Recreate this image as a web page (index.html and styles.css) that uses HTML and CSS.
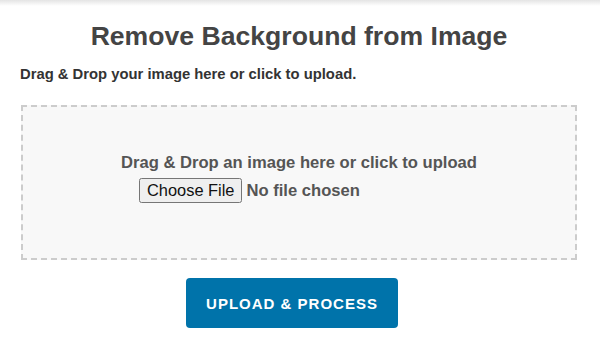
FILE: index.html
```html
<!DOCTYPE html>
<html>
<head>
    <link rel="stylesheet" href="styles.css">
</head>
<body>
    <div class="topbar"></div>
    <div class="container">
        <h2 class="title">Remove Background from Image</h2>
        <p class="intro">Drag &amp; Drop your image here or click to upload.</p>

        <form id="uploadForm">
            <div class="drop-zone" id="dropZone">
                <p class="drop-text">Drag &amp; Drop an image here or click to upload</p>
                <input type="file" id="imageFile" name="imageFile" accept="image/*">
            </div>
            <div class="actions">
                <button type="submit" class="upload-btn">Upload &amp; Process</button>
            </div>
        </form>
    </div>
</body>
</html>
```

FILE: styles.css
```css
body {
    font-family: Arial, "Liberation Sans", sans-serif;
    margin: 0;
    background-color: #fff;
}

.topbar {
    height: 6px;
    background: linear-gradient(#e4e4e4, #fff);
}

.container {
    padding: 0 23px 0 21px;
}

.title {
    font-size: 26.6px;
    color: #444;
    text-align: center;
    margin: 15px 0 14px;
}

.intro {
    font-size: 14.8px;
    font-weight: bold;
    color: #333;
    margin: 0 0 23px -1px;
}

.drop-zone {
    background-color: #f8f8f8;
    border: 2px dashed #ccc;
    padding-top: 46px;
    box-sizing: border-box;
    height: 155px;
    display: flex;
    flex-direction: column;
    align-items: center;
    text-align: center;
}

.drop-text {
    font-size: 16.6px;
    font-weight: bold;
    color: #555;
    margin: 0 0 5px;
}

.drop-zone input {
    font-family: inherit;
    font-size: 16.6px;
    font-weight: bold;
    color: #555;
    margin-right: 6px;
}

.drop-zone input::file-selector-button {
    font-family: inherit;
    font-size: 16.4px;
    font-weight: normal;
    color: #111;
}

.actions {
    display: flex;
    justify-content: center;
    margin-top: 18px;
    padding-right: 14px;
}

.upload-btn {
    background-color: #0073aa;
    color: #fff;
    border: none;
    border-radius: 4px;
    font-family: Arial, "Liberation Sans", sans-serif;
    font-size: 15px;
    font-weight: bold;
    letter-spacing: 1px;
    text-transform: uppercase;
    width: 212px;
    height: 50px;
}
```
